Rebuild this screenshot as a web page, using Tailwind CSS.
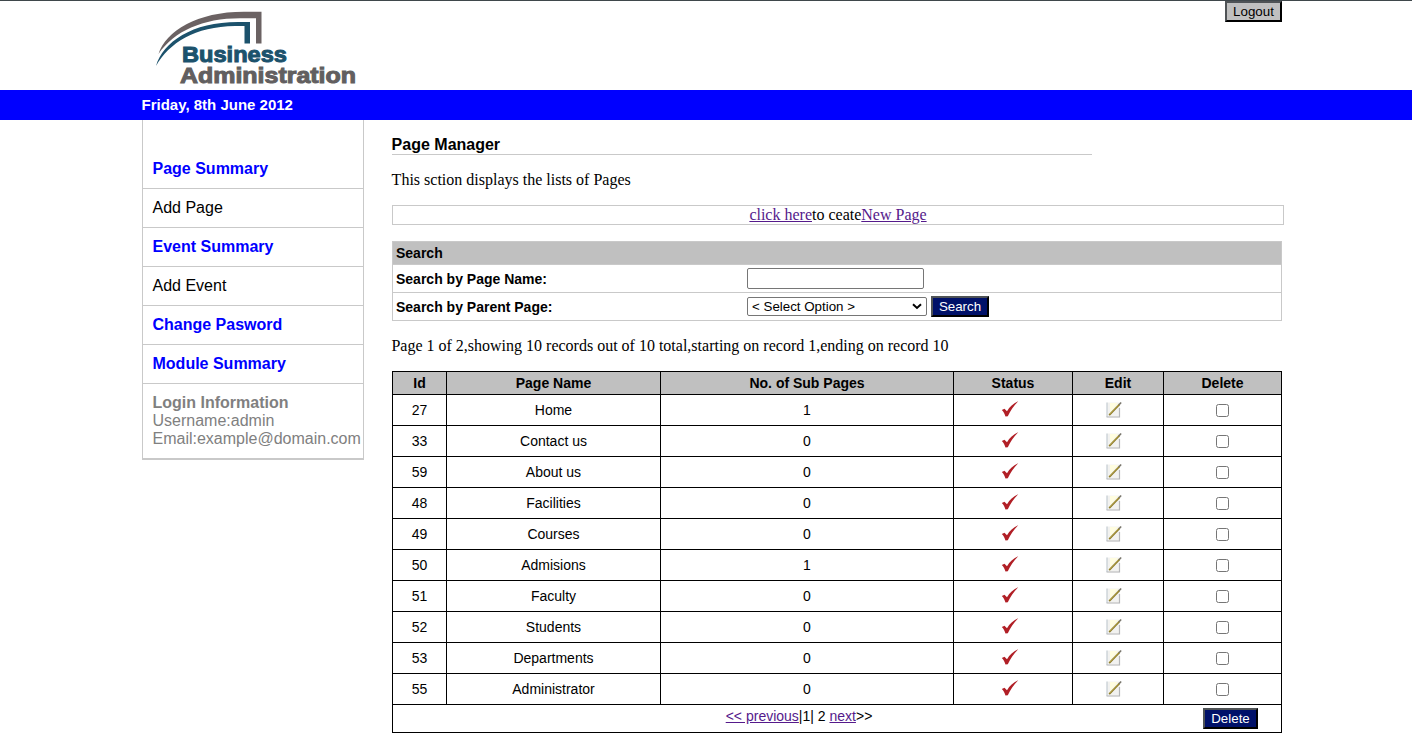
<!DOCTYPE html>
<html lang="en">
<head>
<meta charset="utf-8">
<title>Page Manager</title>
<script src="https://cdn.jsdelivr.net/npm/@tailwindcss/browser@4"></script>
</head>
<body class="bg-white text-black font-['Liberation_Sans',Arial,sans-serif] h-[736px] overflow-hidden">
<header class="h-[90px] border-t border-[#3f474b] flex justify-between pl-[150px] pr-[130px]">
  <svg class="w-[220px] h-[89px]" viewBox="150 1 220 89">
    <path d="M158.500 54C166 31 197 11.800 244 11.800H261.500V43.500H256V18.200H240C203 18.200 174 31 158.500 54Z" fill="#6b6263"/>
    <path d="M156 66C163 42 192 22 238 22H250V43.500H244.500V26H235C195 26.500 169 43 156 66Z" fill="#1c526c"/>
    <g font-family="Liberation Sans,Arial,sans-serif" font-weight="700" font-size="21.5" stroke-width="1">
      <text x="182" y="62" textLength="105" lengthAdjust="spacingAndGlyphs" fill="#1c526c" stroke="#1c526c">Business</text>
      <text x="180" y="83.300" textLength="176" lengthAdjust="spacingAndGlyphs" fill="#625f60" stroke="#625f60">Administration</text>
    </g>
  </svg>
  <button class="h-[21px] w-[57px] border-2 border-t-[#4f5356] border-l-[#4f5356] border-r-black border-b-black bg-[#c0c0c0] text-[13.33px] leading-[17px]">Logout</button>
</header>
<div class="h-[30px] bg-[#0000ff] pl-[141.500px] text-white font-bold text-[15px] leading-[30px]">Friday, 8th June 2012</div>
<div class="flex pl-[142px]">
  <aside class="w-[222px] h-[340px] border-x border-b-2 border-[#c9c9c9] text-base leading-[18px]">
    <nav class="flex flex-col font-bold text-[#0000ff]">
      <a class="h-[69px] border-b border-[#c9c9c9] pt-[40px] pl-[9.500px]">Page Summary</a>
      <a class="h-[39px] border-b border-[#c9c9c9] pt-[10px] pl-[9.500px] font-normal text-black">Add Page</a>
      <a class="h-[39px] border-b border-[#c9c9c9] pt-[10px] pl-[9.500px]">Event Summary</a>
      <a class="h-[39px] border-b border-[#c9c9c9] pt-[10px] pl-[9.500px] font-normal text-black">Add Event</a>
      <a class="h-[39px] border-b border-[#c9c9c9] pt-[10px] pl-[9.500px]">Change Pasword</a>
      <a class="h-[39px] border-b border-[#c9c9c9] pt-[10px] pl-[9.500px]">Module Summary</a>
    </nav>
    <div class="pt-[10px] pl-[9.500px] text-[#808080] whitespace-nowrap"><b>Login Information</b><br>Username:admin<br>Email:example@domain.com</div>
  </aside>
  <main class="ml-[28px] w-[892px]">
    <h1 class="h-[35px] w-[700px] border-b border-[#c9c9c9] pt-[16px] text-base leading-[18px] font-bold -ml-[0.4px]">Page Manager</h1>
    <p class="mt-[16px] h-[18px] font-['Liberation_Serif',serif] text-base leading-[18px] -ml-[0.4px]">This sction displays the lists of Pages</p>
    <div class="mt-[16px] h-[20px] border border-[#c9c9c9] text-center font-['Liberation_Serif',serif] text-base leading-[18px]"><a class="underline text-[#551a8b]">click here</a>to ceate<a class="underline text-[#551a8b]">New Page</a></div>
    <form class="mt-[16px] h-[80px] w-[890px] border border-[#c9c9c9] text-sm font-bold">
      <div class="h-[23px] border-b border-[#c9c9c9] bg-[#c0c0c0] pl-[3px] leading-[23px]">Search</div>
      <div class="h-[28px] border-b border-[#c9c9c9] flex items-center pl-[3px]"><span class="w-[351px]">Search by Page Name:</span><input type="text" class="w-[177px] h-[21px] border border-[#767676] rounded-[2px]"></div>
      <div class="h-[27px] flex items-center pl-[3px]"><span class="w-[351px]">Search by Parent Page:</span>
        <div class="w-[180px] h-[19px] border border-[#767676] rounded-[2px] flex items-center justify-between pl-[4px] pr-[4px] text-[13.33px] font-normal"><span>&lt; Select Option &gt;</span><svg class="w-[10px] h-[7px]" viewBox="0 0 10 7"><path d="M1 1.300l4 3.700 4-3.700" fill="none" stroke="#000" stroke-width="2"/></svg></div>
        <button class="ml-[4px] w-[58px] h-[21px] border-2 border-t-[#4f5356] border-l-[#4f5356] border-r-black border-b-black bg-[#001169] text-white text-[13.33px] leading-[17px] font-normal">Search</button></div>
    </form>
    <p class="mt-[16px] -ml-[0.6px] h-[18px] font-['Liberation_Serif',serif] text-base leading-[18px]">Page 1 of 2,showing 10 records out of 10 total,starting on record 1,ending on record 10</p>
    <div class="mt-[16px] w-[890px] border-t border-l border-black text-sm">
      <div class="grid grid-cols-[54px_214px_293px_119px_91px_118px] h-[23px] bg-[#c0c0c0] text-center font-bold leading-[22px]">
        <div class="border-r border-b">Id</div><div class="border-r border-b">Page Name</div><div class="border-r border-b">No. of Sub Pages</div><div class="border-r border-b">Status</div><div class="border-r border-b">Edit</div><div class="border-r border-b">Delete</div>
      </div>
      <div id="rows"></div>
      <div class="h-[28px] border-r border-b flex">
        <div class="w-[812px] text-center leading-[23px]"><a class="underline text-[#551a8b]">&lt;&lt; previous</a>|1| 2 <a class="underline text-[#551a8b]">next</a>&gt;&gt;</div>
        <button class="-ml-[2px] mt-[3px] w-[55px] h-[21px] border-2 border-t-[#4f5356] border-l-[#4f5356] border-r-black border-b-black bg-[#001169] text-white text-[13.33px] leading-[17px]">Delete</button>
      </div>
    </div>
  </main>
</div>
<template id="row">
  <div class="grid grid-cols-[54px_214px_293px_119px_91px_118px] h-[31px] text-center leading-[30px]">
    <div class="border-r border-b"></div><div class="border-r border-b"></div><div class="border-r border-b"></div>
    <div class="border-r border-b pl-[47px] pt-[5px]"><svg class="block w-[18px] h-[18px]" viewBox="0 0 18 18"><path d="M.8 10L3.500 8.700 6 11.200C8.800 6.800 12 3.500 17.200 1.200 12.500 5.800 9.500 10.500 6.800 16.300L4.500 16.500C3.500 13.800 2.500 11.500.8 10Z" fill="#b11f26"/></svg></div>
    <div class="border-r border-b pl-[32px] pt-[6px]"><svg class="block w-[18px] h-[18px]" viewBox="0 0 18 18"><path d="M2 1.500H15V16.500H2Z" fill="#f2f2f0"/><path d="M5 2h8L5 11Z" fill="#fffde0"/><path d="M2 1.500V16" fill="none" stroke="#c3cbd2" stroke-width="1.200"/><path d="M1.500 16H14.500V7" fill="none" stroke="#b5b6b8" stroke-width="1.200"/><path d="M4.200 14.200L14.500 3.300" stroke="#8b7928" stroke-width="1.700"/><path d="M4.500 13.200L13.500 3.700" stroke="#cdbd60" stroke-width=".8"/><path d="M14 3.800L16.200 1.500" stroke="#77746b" stroke-width="1.600"/></svg></div>
    <div class="border-r border-b flex items-center justify-center"><input type="checkbox" class="w-[13px] h-[13px] mt-[1px]"></div>
  </div>
</template>
<script>
const data = [[27,'Home',1],[33,'Contact us',0],[59,'About us',0],[48,'Facilities',0],[49,'Courses',0],[50,'Admisions',1],[51,'Faculty',0],[52,'Students',0],[53,'Departments',0],[55,'Administrator',0]];
const holder = document.getElementById('rows'), tpl = document.getElementById('row');
for (const r of data) {
  const node = tpl.content.cloneNode(true), cells = node.firstElementChild.children;
  r.forEach((v, i) => cells[i].textContent = v);
  holder.append(node);
}
</script>
</body>
</html>
